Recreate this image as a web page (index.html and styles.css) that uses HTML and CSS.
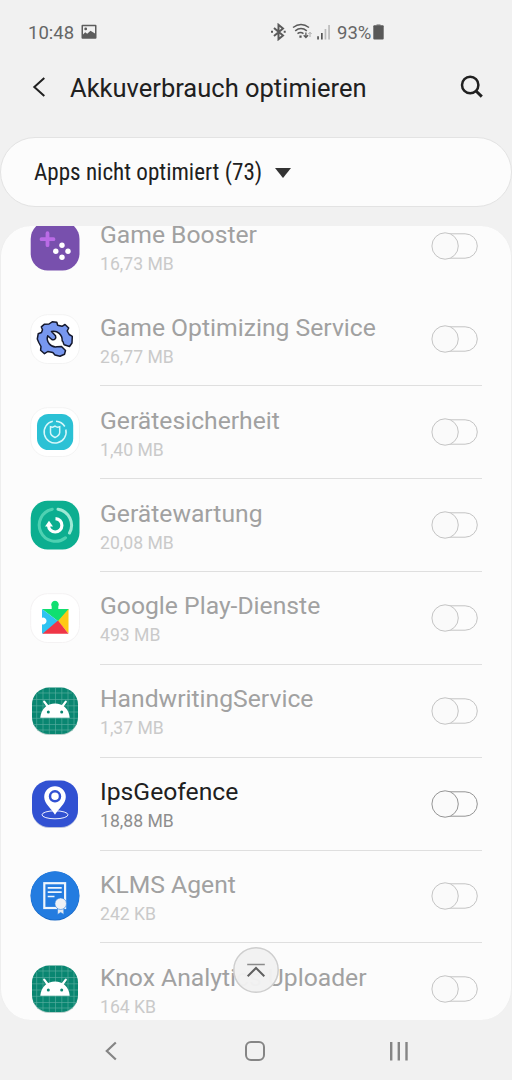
FILE: index.html
```html
<!DOCTYPE html>
<html lang="de">
<head>
<meta charset="utf-8">
<title>Akkuverbrauch optimieren</title>
<link rel="stylesheet" href="styles.css">
</head>
<body>
<svg class="defs" aria-hidden="true">
  <symbol id="droid" viewBox="0 0 50 50">
    <rect x="2" y="2.600" width="46" height="46.400" rx="17" fill="#b9cfcb"/>
    <rect x="2" y="1.600" width="46" height="46.400" rx="17" fill="#098671"/>
    <path d="M6.700 8V42M13 3V47M19.300 2V48M25.500 2V48M31.800 2V48M38 3V47M44 8V42M8 7H42M3 13.500H47M2 19.800H48M2 26H48M2 32.300H48M3 38.500H47M7 44H43" stroke="#58ad9f" stroke-width=".65"/>
    <path d="M17.800 20.500L14.200 15.600M32.200 20.500L35.800 15.600" fill="none" stroke="#fff" stroke-width="2.200" stroke-linecap="round"/>
    <path d="M10.300 31.700C11 22.800 17.300 17.600 25 17.600S39 22.800 39.700 31.700Z" fill="#fff"/>
    <circle cx="18.300" cy="26" r="1.500" fill="#098671"/><circle cx="31.700" cy="26" r="1.500" fill="#098671"/>
  </symbol>
  <symbol id="switch" viewBox="0 0 48 30">
    <rect x="2.500" y="2.800" width="43.800" height="24.400" rx="12.200" fill="#fcfcfc" stroke="currentColor"/>
    <circle cx="14.100" cy="15" r="13.200" fill="#fafafa" stroke="currentColor"/>
  </symbol>
</svg>

<header class="status">
  <span class="clock">10:48</span>
  <svg class="picture" viewBox="0 0 16 16"><path fill="#5c5c5c" fill-rule="evenodd" d="M1.500.8h13q1 0 1 1v12q0 1-1 1h-13q-1 0-1-1v-12q0-1 1-1ZM2 2.200V10.500L4.200 8.200 6.200 9.800 9.500 6.700 14 9.500V2.200ZM4.700 3.500a1.400 1.400 0 1 1 0 2.800 1.400 1.400 0 1 1 0-2.800Z"/></svg>
  <svg class="signals" viewBox="0 0 60 18">
    <g fill="none" stroke="#5a5a5a">
      <path d="M3 5L12 12.500 7.500 16.200V1.800L12 5.500 3 13" stroke-width="2"/>
      <path d="M22 4.500Q30-1.500 38 4.500M24.200 7.800Q30 3.200 35.800 7.800M26.500 10.700Q29.500 8.500 32.500 10.700" stroke-width="1.500"/>
      <path d="M34.900 9.500V14M32.700 12.300L34.900 14.500 37.100 12.300" stroke-width="1.300"/>
      <path d="M39 14V9.500M37.400 11L39 9.300 40.600 11" stroke="#aaa" stroke-width="1"/>
    </g>
    <path d="M0 7.800h2v2H0zM12.700 7.800h2v2h-2zM28.400 12.500h2.200v2.200h-2.200z" fill="#555"/>
    <path d="M46.200 13.200H47.900V16.500H46.200zM50 10H51.700V16.500H50z" fill="#555"/>
    <path d="M53.600 6H55.300v10.500h-1.700zM57.200 2h1.700v14.500h-1.700z" fill="#bbb"/>
  </svg>
  <span class="percent">93%</span>
  <svg class="battery" viewBox="0 0 11 16"><path d="M3.500 0h4v2h-4z" fill="#aaa"/><rect x=".3" y="1.300" width="10.400" height="14.300" rx="1" fill="#585858"/></svg>
</header>

<div class="appbar">
  <svg class="back" viewBox="0 0 14 22"><path d="M12.300 2L2.300 11 12.300 20" fill="none" stroke="#202020" stroke-width="2"/></svg>
  <h1>Akkuverbrauch optimieren</h1>
  <svg class="search" viewBox="0 0 24 24"><circle cx="10.200" cy="10" r="8.200" fill="none" stroke="#202020" stroke-width="2.500"/><path d="M16 16L21.800 21.600" stroke="#202020" stroke-width="3"/></svg>
</div>

<div class="filter">
  <span>Apps nicht optimiert (73)</span>
  <svg viewBox="0 0 16 10"><path d="M0 0H16L8 10Z" fill="#333"/></svg>
</div>

<main class="list">
  <div class="rows">
    <div class="row">
      <svg class="icon" viewBox="0 0 50 50"><rect x=".7" y=".7" width="48.800" height="48.800" rx="17" fill="#7850ad"/><path d="M11.500 18.200H23.500M17.500 12.200V24.200" stroke="#ba6be6" stroke-width="3.800" stroke-linecap="round"/><g fill="#fff"><circle cx="32" cy="24.200" r="2.700"/><circle cx="25.800" cy="30.200" r="2.700"/><circle cx="38" cy="30.200" r="2.700"/><circle cx="32" cy="36.200" r="2.700"/></g></svg>
      <div class="body plain"><div class="text"><b>Game Booster</b><small>16,73 MB</small></div><svg class="switch"><use href="#switch"/></svg></div>
    </div>
    <div class="row">
      <svg class="icon" viewBox="0 0 50 50"><rect x=".7" y=".7" width="48.800" height="48.800" rx="17" fill="#fff" stroke="#f3f3f3"/>
        <path d="M19 10L22.200 7.800 26.800 8.200 27.700 11.300 32 12.300 35 10.500 38.700 14 37.200 17 39.200 20.500 42.300 22.300 42 29 39.500 32.500 34.200 30.800C33 29.500 33.800 27.800 32.200 26.800C32.500 20.500 27.500 16.300 21.500 17.500L25.500 21.800C26.500 24.500 24.500 26.500 21.800 25.500L17.700 21.800C15.800 27.500 20.500 33.800 27 32.800L31.500 32.500 35.500 36.500 34.500 40.200 30 42.200 25 41 22.800 38.500 17.800 37.500 14.500 39.700 10.600 36.300 11 32.500 8.800 28.500 7.300 25 8.200 19.800 11.500 18.500 12.500 15.800 11.300 12.800 14.500 10.200Z" fill="#7797ef" stroke="#14182c" stroke-width="1.500" stroke-linejoin="round"/></svg>
      <div class="body"><div class="text"><b>Game Optimizing Service</b><small>26,77 MB</small></div><svg class="switch"><use href="#switch"/></svg></div>
    </div>
    <div class="row">
      <svg class="icon" viewBox="0 0 50 50"><rect x=".7" y=".7" width="48.800" height="48.800" rx="17" fill="#fff" stroke="#f3f3f3"/><rect x="7" y="7" width="36.200" height="36" rx="11.500" fill="#2bc1d5"/>
        <g fill="none" stroke="#d6f7fa" stroke-width="1.500"><path d="M26 14.200A11 11 0 0 1 34.800 19.500M35.800 22.500A11 11 0 1 1 22.800 14.300"/><path d="M20.500 19.800Q23 20.800 25 19.200Q27.200 20.800 29.700 19.800V25.500Q29.500 28.500 25 30.500Q20.500 28.500 20.500 25.500Z"/></g></svg>
      <div class="body"><div class="text"><b>Gerätesicherheit</b><small>1,40 MB</small></div><svg class="switch"><use href="#switch"/></svg></div>
    </div>
    <div class="row">
      <svg class="icon" viewBox="0 0 50 50"><rect x=".7" y=".7" width="48.800" height="48.800" rx="17" fill="#0cae90"/>
        <g fill="none" stroke-width="3"><path d="M28 9.200A16.200 16.200 0 0 1 39.500 33" stroke="#9fe9d5" stroke-linecap="round"/><path d="M35.500 37.800A16.200 16.200 0 1 1 22.300 9.200" stroke="#4ed1b2" stroke-linecap="round"/><path d="M25.500 18.600A6.700 6.700 0 1 1 18.500 25.500" stroke="#fff" stroke-width="3.200"/></g><path d="M15 26.500L19 20.800 23 26.500Z" fill="#fff"/></svg>
      <div class="body"><div class="text"><b>Gerätewartung</b><small>20,08 MB</small></div><svg class="switch"><use href="#switch"/></svg></div>
    </div>
    <div class="row">
      <svg class="icon" viewBox="0 0 50 50"><rect x=".7" y=".7" width="48.800" height="48.800" rx="17" fill="#fff" stroke="#f4f2f3"/>
        <path d="M12 16H21.700V13.500A3.800 3.800 0 1 1 28.300 13.500V16H38.500V17L28.500 28.500 12 16Z" fill="#10df70"/><path d="M12 16L28.500 28.500 14 40.500H12V31.200A3.400 3.400 0 1 0 12 24.800Z" fill="#2ec3f1"/><path d="M38.500 16V40.500L28 28Z" fill="#ffc915"/><path d="M12.500 40.800L28 27.500 38.500 40.800Z" fill="#ef3647"/></svg>
      <div class="body"><div class="text"><b>Google Play-Dienste</b><small>493 MB</small></div><svg class="switch"><use href="#switch"/></svg></div>
    </div>
    <div class="row">
      <svg class="icon"><use href="#droid"/></svg>
      <div class="body"><div class="text"><b>HandwritingService</b><small>1,37 MB</small></div><svg class="switch"><use href="#switch"/></svg></div>
    </div>
    <div class="row active">
      <svg class="icon" viewBox="0 0 50 50"><rect x="2" y="2.600" width="46" height="46.400" rx="17" fill="#b8c1de"/><rect x="2" y="1.600" width="46" height="46.400" rx="17" fill="#3151d2"/><ellipse cx="25" cy="35.800" rx="13" ry="4" fill="none" stroke="#eef1ff" stroke-width="1"/><path fill="#fff" d="M25 35.800C22 30 14.200 25 14.200 18A10.800 10.800 0 0 1 35.800 18C35.800 25 28 30 25 35.800Z"/><circle cx="25" cy="17.300" r="5" fill="#fff" stroke="#3151d2" stroke-width="2.500"/></svg>
      <div class="body"><div class="text"><b>IpsGeofence</b><small>18,88 MB</small></div><svg class="switch"><use href="#switch"/></svg></div>
    </div>
    <div class="row">
      <svg class="icon" viewBox="0 0 50 50"><circle cx="25" cy="25" r="24.500" fill="#1767c4"/><circle cx="25" cy="24.500" r="24.200" fill="#237ce0"/><rect x="14.300" y="12.200" width="20.800" height="24.800" fill="none" stroke="#eef5fc" stroke-width="2.200"/><path d="M17.700 16.800H31.700M17.700 21.200H31.700M17.700 25.500H24.500" stroke="#eef5fc" stroke-width="1.700"/><path d="M27.500 32V43.500L30.700 41.500 33.800 43.500V32Z" fill="#e3eaf2" stroke="#237ce0" stroke-width=".6"/><circle cx="30.700" cy="32.700" r="5.800" fill="#eef1f5" stroke="#237ce0" stroke-width=".6"/></svg>
      <div class="body"><div class="text"><b>KLMS Agent</b><small>242 KB</small></div><svg class="switch"><use href="#switch"/></svg></div>
    </div>
    <div class="row">
      <svg class="icon"><use href="#droid"/></svg>
      <div class="body plain"><div class="text"><b>Knox Analytics Uploader</b><small>164 KB</small></div><svg class="switch"><use href="#switch"/></svg></div>
    </div>
  </div>
  <button class="totop" aria-label="Nach oben"><svg viewBox="0 0 46 46"><circle cx="23" cy="23" r="22.200" fill="#f2f2f2" fill-opacity=".97" stroke="#cecece" stroke-width="1.500"/><path d="M14.200 17.500H31.800" stroke="#8a8a8a" stroke-width="1.600"/><path d="M14.700 29.200L23 21 31.300 29.200" fill="none" stroke="#606060" stroke-width="2"/></svg></button>
</main>

<nav class="navbar">
  <svg viewBox="0 0 22 22"><path d="M15.800 2.500L6.800 11 15.800 19.500" fill="none" stroke="#858585" stroke-width="2.200"/></svg>
  <svg viewBox="0 0 22 22"><rect x="2" y="2" width="18" height="18" rx="5" fill="none" stroke="#858585" stroke-width="2"/></svg>
  <svg viewBox="0 0 22 22"><path d="M3.200 2V20.500M10.800 2V20.500M18.500 2V20.500" fill="none" stroke="#858585" stroke-width="2.400"/></svg>
</nav>
</body>
</html>
```
FILE: styles.css
```css
* { box-sizing: border-box; }
body {
  margin: 0;
  width: 512px;
  height: 1080px;
  overflow: hidden;
  background: #f1f1f1;
  font-family: Roboto, sans-serif;
  color: #202020;
  display: flex;
  flex-direction: column;
}
svg { display: block; flex: none; }
.defs { width: 0; height: 0; position: absolute; }

.status {
  height: 58px;
  padding: 7px 0 0 28px;
  display: flex;
  align-items: center;
  color: #666;
  font-size: 18.500px;
}
.clock { width: 53px; }
.picture { width: 16px; height: 16px; margin-top: -1px; }
.signals { width: 60px; height: 18px; margin: -2px 0 0 174px; }
.percent { width: 34px; margin-left: 6px; }
.battery { width: 11px; height: 16px; margin: -2px 0 0 2px; }

.appbar {
  height: 60px;
  padding-left: 32px;
  display: flex;
  align-items: center;
}
.back { width: 14px; height: 22px; margin-top: -2px; }
h1 {
  margin: 0 0 0 24px;
  width: 390px;
  font-size: 25.500px;
  font-weight: 400;
  line-height: 32px;
  white-space: nowrap;
}
.search { width: 24px; height: 24px; margin-top: -2px; }

.filter {
  margin: 19px 0 0;
  height: 70px;
  padding: 0 0 0 33px;
  display: flex;
  align-items: center;
  gap: 13px;
  background: #fcfcfc;
  border: 1px solid #e3e3e3;
  border-radius: 35px;
  font-size: 23.100px;
}
.filter span { width: 228px; font-family: "Roboto Condensed", Roboto, sans-serif; font-stretch: condensed; white-space: nowrap; }
.filter svg { width: 16px; height: 10px; margin-top: 1px; }

.list {
  position: relative;
  margin-top: 19px;
  height: 794px;
  overflow: hidden;
  background: #fcfcfc;
  border-left: 1px solid #eee;
  border-right: 1px solid #eee;
  border-radius: 31px;
}
.rows { margin-top: -25.500px; }
.row {
  height: 92.860px;
  padding: 0 29px 0 28.500px;
  display: flex;
  align-items: center;
}
.icon { width: 50px; height: 50px; margin-top: -1px; }
.body {
  height: 100%;
  margin-left: 20.500px;
  flex: 1;
  display: flex;
  align-items: center;
  justify-content: space-between;
  border-bottom: 1.500px solid #dfdfdf;
}
.body.plain { border-color: transparent; }
.text { display: flex; flex-direction: column; padding-top: 3px; white-space: nowrap; }
.text b { font-weight: 400; font-size: 24.700px; line-height: 32px; color: #a1a1a1; }
.text small { font-size: 17.600px; line-height: 26px; color: #cacaca; }
.switch { width: 48px; height: 30px; margin-right: 3px; color: #c4c4c4; }
.active b { color: #202020; }
.active small { color: #8e8e8e; }
.active .switch { color: #949494; }

.totop {
  position: absolute;
  left: 232px;
  top: 721px;
  width: 46px;
  height: 46px;
  padding: 0;
  border: 0;
  background: none;
}

.navbar {
  height: 60px;
  padding: 2px 102px 0 100px;
  display: flex;
  align-items: center;
  justify-content: space-between;
}
.navbar svg { width: 22px; height: 22px; }
```
